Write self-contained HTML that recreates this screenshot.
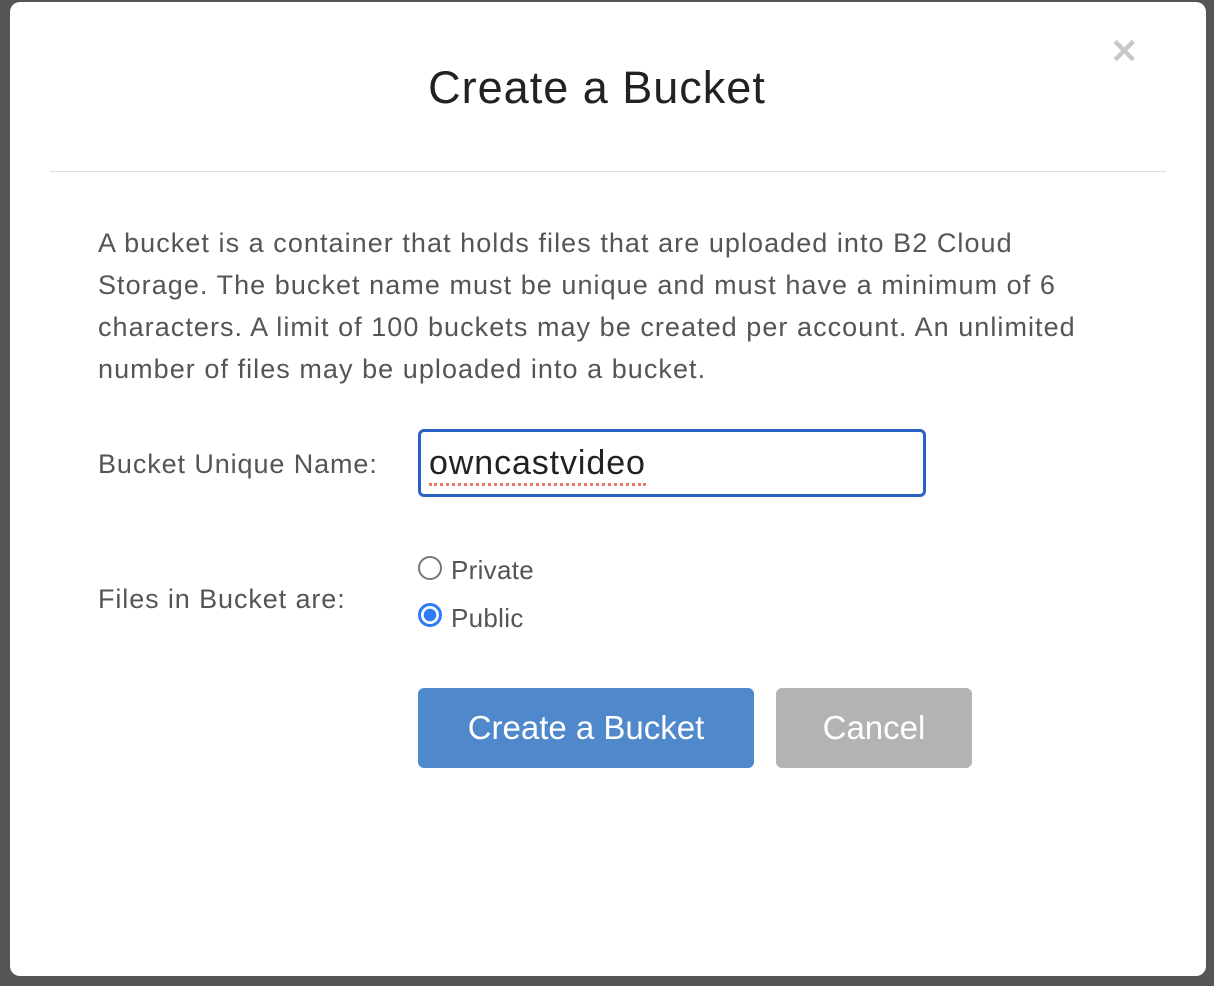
<!DOCTYPE html>
<html><head><style>
body{margin:0;width:1214px;height:986px;background:#555;position:relative;overflow:hidden;font-family:"Liberation Sans",sans-serif}
.m{position:absolute;left:10px;top:2px;width:1196px;height:974px;background:#fff;border-radius:10px}
.t{position:absolute;left:0;width:1174px;top:60px;text-align:center;font-size:45px;color:#222;letter-spacing:1px}
.x{position:absolute;left:1100px;top:30px;font-size:34px;color:#c8c8c8;font-weight:bold}
.hr{position:absolute;left:40px;top:169px;width:1116px;height:1px;background:#ddd}
.p{position:absolute;left:88px;top:220px;width:1100px;font-size:27px;line-height:42px;color:#555;letter-spacing:1.05px;white-space:nowrap}
.l{position:absolute;left:88px;font-size:27px;color:#555;letter-spacing:0.9px}
.in{position:absolute;left:408px;top:427px;width:502px;height:62px;border:3px solid #2a62c4;border-radius:6px;box-sizing:content-box}
.in span{position:absolute;left:8px;top:14px;font-size:34px;color:#222;border-bottom:3px dotted #e87a6a;line-height:34px;padding-bottom:3px;letter-spacing:0.9px}
.r{position:absolute;left:408px;width:24px;height:24px;border:2px solid #777;border-radius:50%;box-sizing:border-box}
.rl{position:absolute;left:441px;font-size:26px;color:#555;letter-spacing:0.3px}
.b{position:absolute;top:686px;height:80px;border-radius:6px;color:#fff;font-size:33px;text-align:center;line-height:80px}
</style></head><body>
<div class="m">
<div class="t">Create a Bucket</div>
<div class="x">✕</div>
<div class="hr"></div>
<div class="p">A bucket is a container that holds files that are uploaded into B2 Cloud<br>Storage. The bucket name must be unique and must have a minimum of 6<br>characters. A limit of 100 buckets may be created per account. An unlimited<br>number of files may be uploaded into a bucket.</div>
<div class="l" style="top:447px">Bucket Unique Name:</div>
<div class="in"><span>owncastvideo</span></div>
<div class="l" style="top:582px">Files in Bucket are:</div>
<div class="r" style="top:554px"></div>
<div class="rl" style="top:553px">Private</div>
<div class="r" style="top:601px;border:3px solid #2f7bf5;background:radial-gradient(circle,#2f7bf5 0 6px,#fff 6.5px)"></div>
<div class="rl" style="top:601px">Public</div>
<div class="b" style="left:408px;width:336px;background:#5088cc">Create a Bucket</div>
<div class="b" style="left:766px;width:196px;background:#b3b3b3">Cancel</div>
</div>
</body></html>
